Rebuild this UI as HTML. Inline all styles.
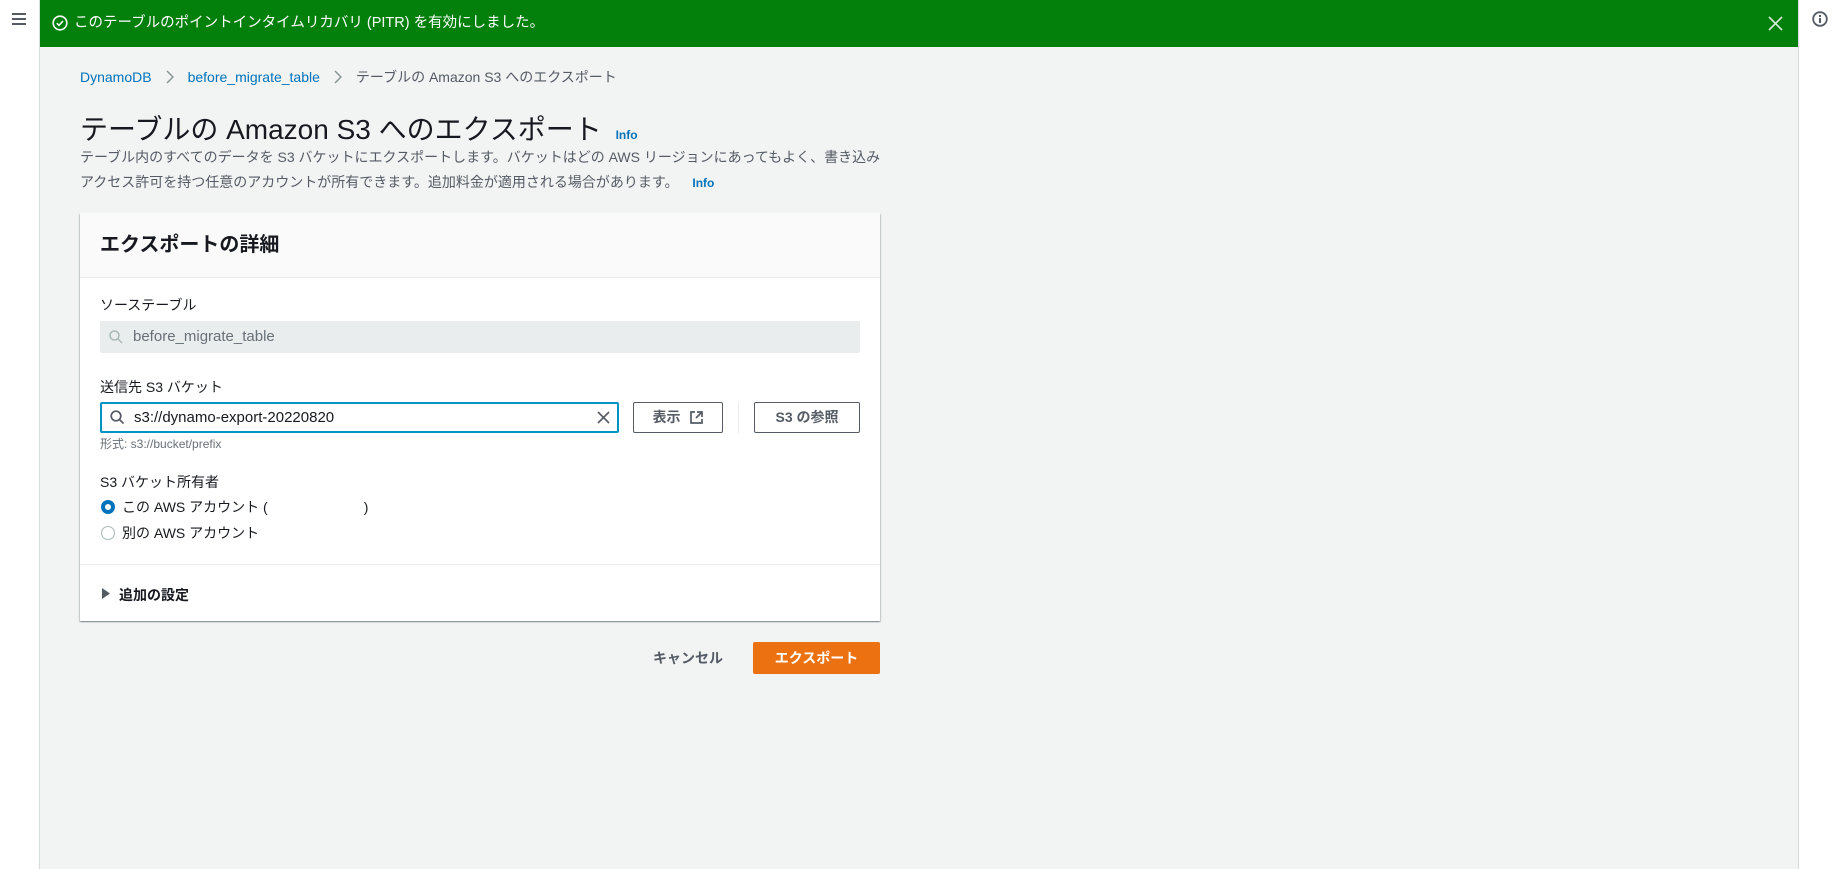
<!DOCTYPE html>
<html><head><meta charset="utf-8"><style>
*{box-sizing:border-box;margin:0;padding:0}
body{width:1837px;height:869px;overflow:hidden;background:#fff;font-family:"Liberation Sans","Noto Sans CJK JP",sans-serif;color:#16191f;position:relative}
.abs{position:absolute}
.side{left:0;top:0;width:40px;height:869px;background:#fff;border-right:1px solid #d5dbdb}
.rside{left:1798px;top:0;width:39px;height:869px;background:#fff;border-left:1px solid #d5dbdb}
.main{left:40px;top:0;width:1758px;height:869px;background:#f2f3f3}
.flash{left:40px;top:0;width:1758px;height:47px;background:#037f0c;color:#fff;font-size:14.5px;line-height:47px;padding-left:34px}
.bc{left:80px;top:67px;font-size:14px;color:#545b64;white-space:nowrap}
.bc a{color:#0073bb;text-decoration:none}
.bc svg{margin:0 14px 0 14px;vertical-align:-2px}
h1{position:absolute;left:80px;top:108px;font-size:28px;font-weight:400;color:#16191f;white-space:nowrap}
.info{color:#0073bb;font-size:12px;font-weight:700}
.desc{left:80px;top:145px;font-size:14px;line-height:25px;color:#545b64;white-space:nowrap}
.panel{left:80px;top:213px;width:800px;height:408px;background:#fff;box-shadow:0 1px 1px rgba(0,28,36,.3),1px 1px 1px rgba(0,28,36,.15),-1px 1px 1px rgba(0,28,36,.15)}
.ph{left:0;top:0;width:800px;height:65px;background:#fafafa;border-bottom:1px solid #eaeded;font-size:20px;font-weight:700;line-height:65px;padding-left:20px}
.lbl{font-size:14px;color:#16191f}
.inp{border-radius:2px;font-size:15px}
.btn{border:1px solid #545b64;border-radius:2px;background:#fff;font-size:14px;font-weight:700;color:#545b64;text-align:center;line-height:28px}
.radio{width:14px;height:14px;border-radius:50%}
</style></head><body>
<div class="abs side"><div class="abs" style="left:12px;top:13px;width:14px;height:2px;background:#545b64;box-shadow:0 5px 0 #545b64,0 10px 0 #545b64"></div></div>
<div class="abs main"></div>
<div class="abs rside"><svg class="abs" style="left:13px;top:11px" width="16" height="16" viewBox="0 0 16 16"><circle cx="8" cy="8" r="6.8" fill="none" stroke="#545b64" stroke-width="1.8"/><rect x="7" y="7" width="2" height="5" fill="#545b64"/><rect x="7" y="4" width="2" height="2" fill="#545b64"/></svg></div>
<div class="abs flash"><svg class="abs" style="left:12px;top:15px" width="16" height="16" viewBox="0 0 16 16"><circle cx="8" cy="8" r="6.8" fill="none" stroke="#fff" stroke-width="1.6"/><path d="M4.8 8.2l2.2 2.2 4-4.4" fill="none" stroke="#fff" stroke-width="1.6"/></svg>このテーブルのポイントインタイムリカバリ (PITR) を有効にしました。
<svg class="abs" style="left:1728px;top:16px" width="15" height="15" viewBox="0 0 15 15"><path d="M1 1l13 13M14 1L1 14" stroke="#fff" stroke-width="1.6" opacity=".85"/></svg></div>
<div class="abs bc"><a>DynamoDB</a><svg width="8" height="14" viewBox="0 0 8 14"><path d="M1 1l6 6-6 6" fill="none" stroke="#879596" stroke-width="1.5"/></svg><a>before_migrate_table</a><svg width="8" height="14" viewBox="0 0 8 14"><path d="M1 1l6 6-6 6" fill="none" stroke="#879596" stroke-width="1.5"/></svg>テーブルの Amazon S3 へのエクスポート</div>
<h1>テーブルの Amazon S3 へのエクスポート <span class="info" style="margin-left:6px">Info</span></h1>
<div class="abs desc">テーブル内のすべてのデータを S3 バケットにエクスポートします。バケットはどの AWS リージョンにあってもよく、書き込み<br>アクセス許可を持つ任意のアカウントが所有できます。追加料金が適用される場合があります。 <span class="info" style="margin-left:10px">Info</span></div>
<div class="abs panel">
<div class="abs ph">エクスポートの詳細</div>
<div class="abs lbl" style="left:20px;top:82px">ソーステーブル</div>
<div class="abs inp" style="left:20px;top:108px;width:760px;height:32px;background:#eaeded;color:#687078;line-height:32px;padding-left:33px">before_migrate_table
<svg class="abs" style="left:9px;top:9px" width="14" height="14" viewBox="0 0 14 14"><circle cx="5.5" cy="5.5" r="4.5" fill="none" stroke="#aab7b8" stroke-width="1.5"/><path d="M9 9l4 4" stroke="#aab7b8" stroke-width="1.5"/></svg></div>
<div class="abs lbl" style="left:20px;top:164px">送信先 S3 バケット</div>
<div class="abs inp" style="left:20px;top:189px;width:519px;height:31px;border:2px solid #0093c6;background:#fff;line-height:27px;padding-left:32px;color:#16191f">s3://dynamo-export-20220820
<svg class="abs" style="left:8px;top:6px" width="15" height="15" viewBox="0 0 15 15"><circle cx="6" cy="6" r="4.8" fill="none" stroke="#545b64" stroke-width="1.7"/><path d="M9.5 9.5l4 4" stroke="#545b64" stroke-width="1.7"/></svg>
<svg class="abs" style="left:495px;top:7px" width="13" height="13" viewBox="0 0 13 13"><path d="M1 1l11 11M12 1L1 12" stroke="#545b64" stroke-width="1.6"/></svg></div>
<div class="abs btn" style="left:553px;top:189px;width:90px;height:31px">表示 <svg style="vertical-align:-2px;margin-left:6px" width="13" height="13" viewBox="0 0 13 13"><path d="M5 1H1v11h11V8M7 1h5v5M12 1L6 7" fill="none" stroke="#545b64" stroke-width="1.7"/></svg></div>
<div class="abs" style="left:658px;top:189px;width:1px;height:31px;background:#eaeded"></div>
<div class="abs btn" style="left:674px;top:189px;width:106px;height:31px">S3 の参照</div>
<div class="abs" style="left:20px;top:222px;font-size:12px;color:#687078">形式: s3://bucket/prefix</div>
<div class="abs lbl" style="left:20px;top:259px">S3 バケット所有者</div>
<div class="abs radio" style="left:21px;top:287px;border:4px solid #0073bb"></div>
<div class="abs lbl" style="left:42px;top:284px">この AWS アカウント (<span style="margin-left:96px">)</span></div>
<div class="abs radio" style="left:21px;top:313px;border:1px solid #aab7b8"></div>
<div class="abs lbl" style="left:42px;top:310px">別の AWS アカウント</div>
<div class="abs" style="left:0;top:351px;width:800px;height:1px;background:#eaeded"></div>
<svg class="abs" style="left:22px;top:375px" width="8" height="11" viewBox="0 0 8 11"><path d="M0 0l8 5.5L0 11z" fill="#545b64"/></svg>
<div class="abs lbl" style="left:39px;top:372px;font-weight:700;color:#16191f">追加の設定</div>
</div>
<div class="abs" style="left:653px;top:648px;font-size:14px;font-weight:700;color:#545b64">キャンセル</div>
<div class="abs" style="left:753px;top:642px;width:127px;height:32px;background:#ec7211;border-radius:2px;color:#fff;font-size:14px;font-weight:700;text-align:center;line-height:32px">エクスポート</div>
</body></html>
